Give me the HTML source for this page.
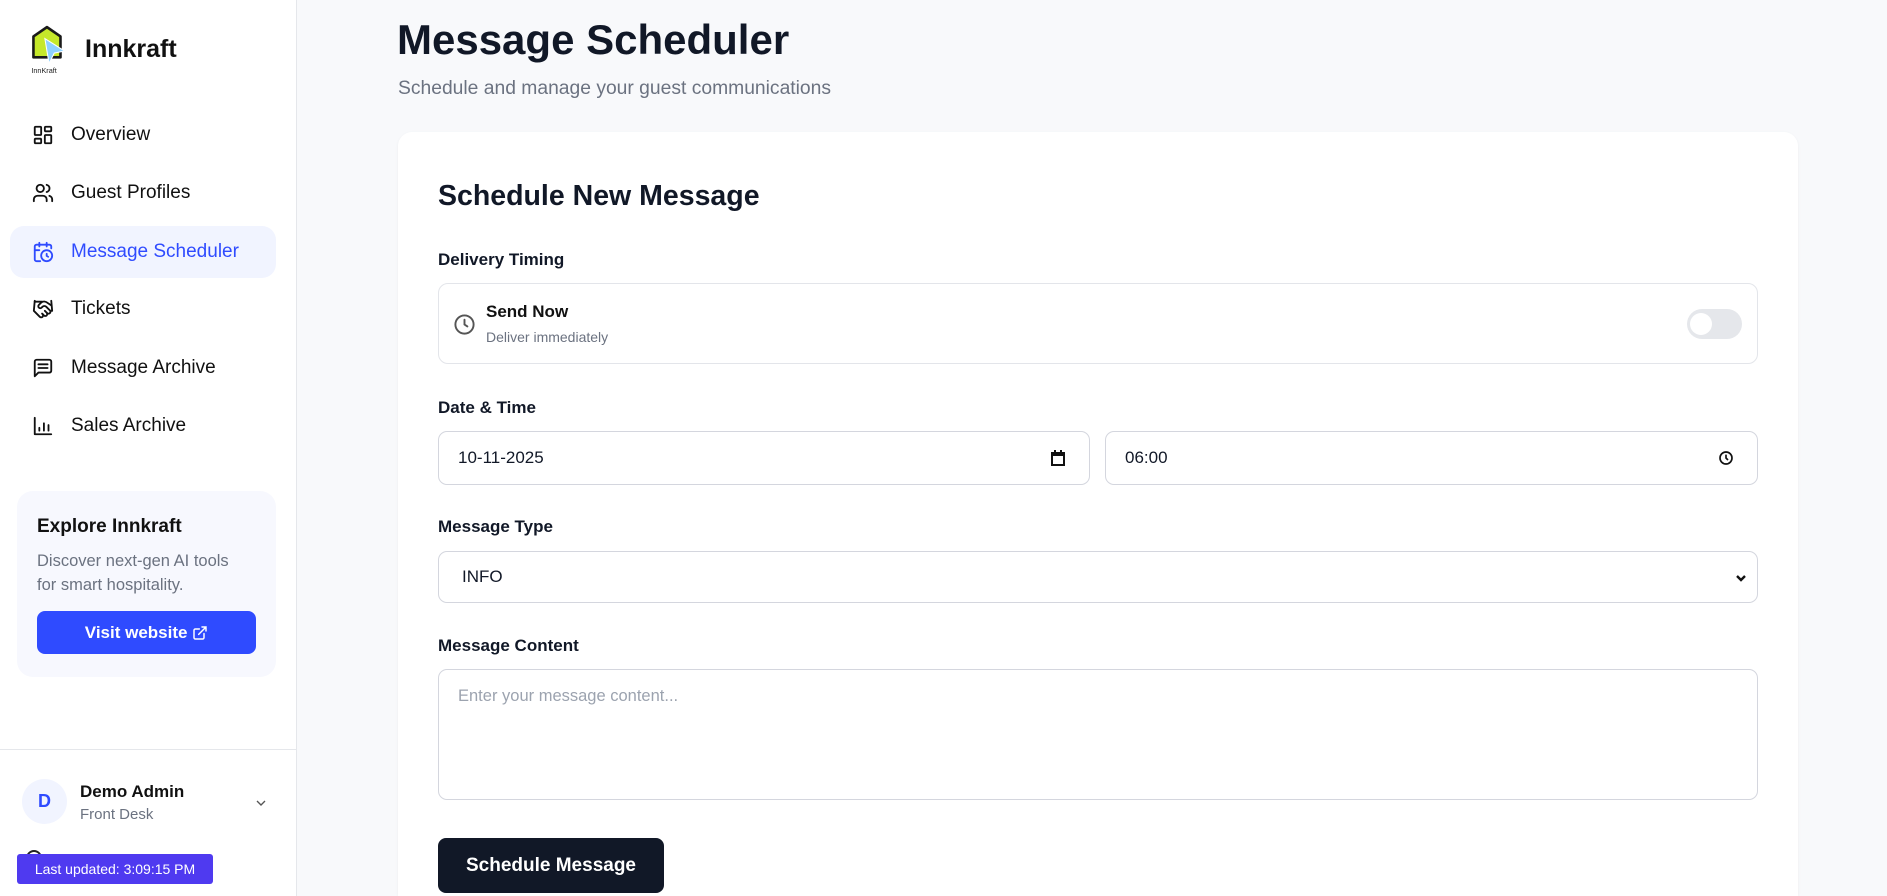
<!DOCTYPE html>
<html style="overflow:hidden;height:896px"><head><meta charset="utf-8"><style>
*{box-sizing:border-box;margin:0;padding:0}
body{width:1887px;height:896px;overflow:hidden;background:#f8f9fb;font-family:"Liberation Sans",sans-serif;color:#111827;position:relative}
.sb{position:absolute;left:0;top:0;width:297px;height:896px;background:#fff;border-right:1px solid #e5e7eb}
.abs{position:absolute}
.nav{position:absolute;left:10px;width:266px;height:52px;border-radius:14px;display:flex;align-items:center;padding-left:22px;font-size:19px;color:#111}
.nav svg{width:22px;height:22px;margin-right:17px;fill:none;stroke:#111;stroke-width:2;stroke-linecap:round;stroke-linejoin:round}
.nav.act{background:#f1f4ff;color:#2f4bff}
.nav.act svg{stroke:#2f4bff}
.lbl{position:absolute;left:438px;font-size:17px;font-weight:bold;color:#111827}
.inp{position:absolute;background:#fff;border:1px solid #d4d6de;border-radius:9px;font-size:17px;color:#111827;display:flex;align-items:center;padding-left:19px}
</style></head><body>
<div class="sb">
  <svg class="abs" style="left:28px;top:24px" width="40" height="52" viewBox="0 0 36 50">
    <path d="M4 12 L17 3 L30 12 L30 32 L4 32 Z" fill="#c5e82a" stroke="#1a1a1a" stroke-width="2.5" stroke-linejoin="round"/>
    <path d="M15 14 L34 26 L24 28 L19 38 Z" fill="#8ed1ff" stroke="#fff" stroke-width="1"/>
    <text x="2" y="47" font-size="7" font-family="Liberation Sans" fill="#222">InnKraft</text>
  </svg>
  <div class="abs" style="left:85px;top:35px;font-size:25px;font-weight:bold;color:#111">Innkraft</div>

  <div class="nav" style="top:109px"><svg viewBox="0 0 24 24"><rect x="3" y="3" width="7" height="9" rx="1"/><rect x="14" y="3" width="7" height="5" rx="1"/><rect x="14" y="12" width="7" height="9" rx="1"/><rect x="3" y="16" width="7" height="5" rx="1"/></svg>Overview</div>
  <div class="nav" style="top:167px"><svg viewBox="0 0 24 24"><circle cx="9" cy="7" r="4"/><path d="M2 21v-2a4 4 0 0 1 4-4h6a4 4 0 0 1 4 4v2"/><path d="M16 3.1a4 4 0 0 1 0 7.8"/><path d="M22 21v-2a4 4 0 0 0-3-3.9"/></svg>Guest Profiles</div>
  <div class="nav act" style="top:226px"><svg viewBox="0 0 24 24"><path d="M21 8V6a2 2 0 0 0-2-2H5a2 2 0 0 0-2 2v14a2 2 0 0 0 2 2h4"/><path d="M16 2v4M8 2v4M3 10h5"/><circle cx="16" cy="16" r="6"/><path d="M16 14v2.2l1.6 1"/></svg>Message Scheduler</div>
  <div class="nav" style="top:283px"><svg viewBox="0 0 24 24"><path d="M11 17l2 2a1 1 0 1 0 3-3"/><path d="M14 14l2.5 2.5a1 1 0 1 0 3-3l-3.9-3.9a3 3 0 0 0-4.2 0l-.9.9a1 1 0 1 1-3-3l2.8-2.8a5.8 5.8 0 0 1 7 .9L21 8"/><path d="M21 3l1 11h-2"/><path d="M3 3L2 14l6.5 6.5a1 1 0 1 0 3-3"/><path d="M3 4h8"/></svg>Tickets</div>
  <div class="nav" style="top:342px"><svg viewBox="0 0 24 24"><path d="M21 15a2 2 0 0 1-2 2H7l-4 4V5a2 2 0 0 1 2-2h14a2 2 0 0 1 2 2z"/><path d="M7 8h10M7 12h10"/></svg>Message Archive</div>
  <div class="nav" style="top:400px"><svg viewBox="0 0 24 24"><path d="M3 3v18h18"/><path d="M8 17v-3M13 17V9M18 17v-6"/></svg>Sales Archive</div>

  <div class="abs" style="left:17px;top:491px;width:259px;height:186px;background:#f7f8fe;border-radius:16px">
    <div class="abs" style="left:20px;top:25px;font-size:19px;font-weight:bold;color:#111">Explore Innkraft</div>
    <div class="abs" style="left:20px;top:58px;font-size:16.5px;color:#6b7280;line-height:24px">Discover next-gen AI tools<br>for smart hospitality.</div>
    <div class="abs" style="left:20px;top:120px;width:219px;height:43px;background:#2f4bff;border-radius:8px;color:#fff;font-size:17px;font-weight:bold;display:flex;align-items:center;justify-content:center">Visit website&nbsp;<svg width="16" height="16" viewBox="0 0 24 24" fill="none" stroke="#fff" stroke-width="2.2" stroke-linecap="round"><path d="M18 13v6a2 2 0 0 1-2 2H5a2 2 0 0 1-2-2V8a2 2 0 0 1 2-2h6"/><path d="M15 3h6v6M10 14L21 3"/></svg></div>
  </div>
  <div class="abs" style="left:0;top:749px;width:296px;height:1px;background:#e5e7eb"></div>
  <div class="abs" style="left:22px;top:779px;width:45px;height:45px;border-radius:50%;background:#f1f4ff;color:#2f4bff;font-size:18px;font-weight:bold;display:flex;align-items:center;justify-content:center">D</div>
  <div class="abs" style="left:80px;top:782px;font-size:17px;font-weight:bold;color:#111">Demo Admin</div>
  <div class="abs" style="left:80px;top:806px;font-size:15px;color:#6b7280">Front Desk</div>
  <svg class="abs" style="left:253px;top:795px" width="16" height="16" viewBox="0 0 24 24" fill="none" stroke="#555" stroke-width="2"><path d="M6 9l6 6 6-6"/></svg>
  <div class="abs" style="left:26px;top:850px;width:16px;height:16px;border-radius:50%;border:2px solid #222"></div>
  <div class="abs" style="left:17px;top:854px;width:196px;height:30px;background:#4f3af0;border-radius:3px;color:#fff;font-size:14px;display:flex;align-items:center;justify-content:center">Last updated: 3:09:15 PM</div>
</div>

<div class="abs" style="left:397px;top:16px;font-size:42px;font-weight:bold;color:#111827">Message Scheduler</div>
<div class="abs" style="left:398px;top:78px;font-size:19.3px;color:#6b7280">Schedule and manage your guest communications</div>

<div class="abs" style="left:398px;top:132px;width:1400px;height:764px;background:#fff;border-radius:14px 14px 0 0;box-shadow:0 1px 3px rgba(0,0,0,0.05)"></div>
<div class="abs" style="left:438px;top:180px;font-size:28.5px;font-weight:bold;color:#111827">Schedule New Message</div>

<div class="lbl" style="top:250px">Delivery Timing</div>
<div class="abs" style="left:438px;top:283px;width:1320px;height:81px;border:1px solid #e3e5ea;border-radius:10px;background:#fff"></div>
<svg class="abs" style="left:453px;top:313px" width="23" height="23" viewBox="0 0 24 24" fill="none" stroke="#555" stroke-width="2" stroke-linecap="round"><circle cx="12" cy="12" r="9.5"/><path d="M12 7v5l3 2"/></svg>
<div class="abs" style="left:486px;top:302px;font-size:17px;font-weight:bold;color:#111">Send Now</div>
<div class="abs" style="left:486px;top:329px;font-size:14px;color:#6b7280">Deliver immediately</div>
<div class="abs" style="left:1687px;top:309px;width:55px;height:30px;border-radius:15px;background:#e5e7eb"><div class="abs" style="left:3px;top:4px;width:22px;height:22px;border-radius:50%;background:#fff"></div></div>

<div class="lbl" style="top:398px">Date &amp; Time</div>
<div class="inp" style="left:438px;top:431px;width:652px;height:54px">10-11-2025
  <svg class="abs" style="left:612px;top:18px" width="14" height="16" viewBox="0 0 14 16"><rect x="1" y="3" width="12" height="12" fill="none" stroke="#111" stroke-width="2"/><rect x="1" y="3" width="12" height="3" fill="#111"/><path d="M4 0v3M10 0v3" stroke="#111" stroke-width="2"/></svg></div>
<div class="inp" style="left:1105px;top:431px;width:653px;height:54px">06:00
  <svg class="abs" style="left:612px;top:18px" width="16" height="16" viewBox="0 0 24 24" fill="none" stroke="#111" stroke-width="2.5"><circle cx="12" cy="12" r="9"/><path d="M12 7v5l3 3"/></svg></div>

<div class="lbl" style="top:517px">Message Type</div>
<div class="inp" style="left:438px;top:551px;width:1320px;height:52px;padding-left:23px">INFO
  <svg class="abs" style="right:10px;top:20px" width="12" height="12" viewBox="0 0 12 12" fill="none" stroke="#111" stroke-width="2.4"><path d="M2 4l4 4 4-4"/></svg></div>

<div class="lbl" style="top:636px">Message Content</div>
<div class="inp" style="left:438px;top:669px;width:1320px;height:131px;align-items:flex-start;padding-top:17px;color:#9ca3af;font-size:16.5px">Enter your message content...</div>

<div class="abs" style="left:438px;top:838px;width:226px;height:55px;background:#111827;border-radius:8px;color:#fff;font-size:19px;font-weight:bold;display:flex;align-items:center;justify-content:center">Schedule Message</div>
</body></html>
